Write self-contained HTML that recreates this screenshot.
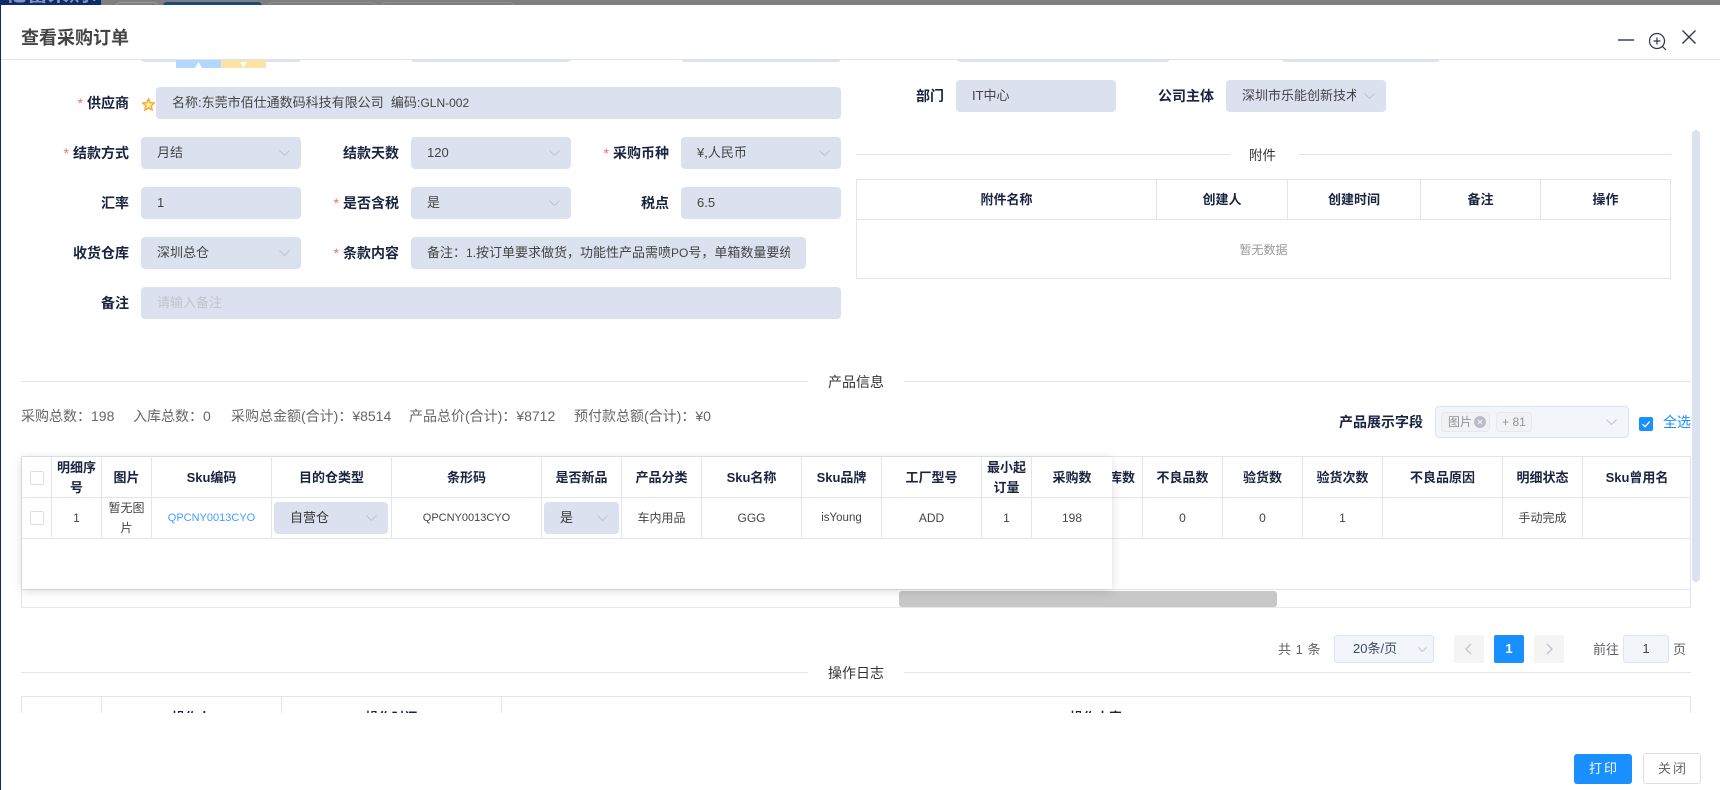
<!DOCTYPE html>
<html lang="zh-CN"><head><meta charset="utf-8"><title>查看采购订单</title>
<style>
*{box-sizing:border-box}
html,body{margin:0;padding:0;width:1720px;height:790px;overflow:hidden;background:#7f7f7f;font-family:"Liberation Sans","Noto Sans CJK SC",sans-serif;color:#444}
.a{position:absolute;white-space:nowrap}
.i{position:absolute;height:32px;line-height:32px;background:#dbe1ef;border-radius:4px;font-size:13px;color:#444;padding-left:16px;white-space:nowrap;overflow:hidden}
.i svg,.s svg{position:absolute;right:11px;top:13px}
.clip{display:block;overflow:hidden;height:32px}
.l{position:absolute;height:32px;line-height:32px;font-size:14px;font-weight:700;color:#1a2440;text-align:right;white-space:nowrap}
.l b{color:#f56c6c;font-weight:400;margin-right:4px}
.ln{position:absolute;height:1px;background:#e0e3ed}
.dv{position:absolute;font-size:14px;line-height:20px;color:#333;white-space:nowrap}
.st{position:absolute;top:406px;font-size:14px;line-height:20px;color:#666;white-space:nowrap}
.r{position:absolute;display:flex}
.r>div{flex:none;height:100%;border-right:1px solid #e0e5ef;border-bottom:1px solid #e0e5ef;display:flex;align-items:center;justify-content:center;text-align:center;position:relative}
.hd>div{font-size:13px;font-weight:700;color:#1a2440;line-height:20px;padding-top:1px}
.bd>div{font-size:12px;color:#444;line-height:20px}
.ck{width:14px;height:14px;border:1px solid #dcdfe6;border-radius:2px;background:#fff}
.s{position:absolute;background:#dbe1ef;border-radius:4px;height:32px;line-height:32px;font-size:13px;color:#333}
.pg{position:absolute;top:635px;width:30px;height:28px;background:#f4f4f5;border-radius:2px}
.tg{position:absolute;top:412px;height:20px;line-height:18px;font-size:12px;color:#909399;background:#f0f2f5;border:1px solid #e9e9eb;border-radius:4px;white-space:nowrap}
</style></head><body>
<!-- backdrop -->
<div class="a" style="left:0;top:0;width:101px;height:5px;background:#0e2a6b;overflow:hidden"><div class="a" style="left:6px;top:-17px;font-size:21px;font-weight:700;color:#7f93bd;line-height:24px">亿蓄采购司</div></div>
<div class="a" style="left:116px;top:2px;width:42px;height:6px;border:1px solid #999;border-radius:4px 4px 0 0"></div>
<div class="a" style="left:163px;top:2px;width:99px;height:6px;background:#1c4a7e;border-radius:4px 4px 0 0"></div>
<div class="a" style="left:268px;top:2px;width:108px;height:6px;border:1px solid #8f8f8f;border-radius:4px 4px 0 0"></div>
<div class="a" style="left:381px;top:2px;width:133px;height:6px;border:1px solid #8f8f8f;border-radius:4px 4px 0 0"></div>
<div class="a" style="left:0;top:5px;width:1px;height:785px;background:#0e2a6b"></div>
<!-- dialog -->
<div class="a" style="left:1px;top:5px;width:1719px;height:785px;background:#fff"></div>

<!-- peek inputs -->
<div class="a" style="left:141px;top:55px;width:160px;height:7px;background:#dbe1ef;border-radius:4px"></div>
<div class="a" style="left:411px;top:55px;width:160px;height:7px;background:#dbe1ef;border-radius:4px"></div>
<div class="a" style="left:681px;top:55px;width:160px;height:7px;background:#dbe1ef;border-radius:4px"></div>
<div class="a" style="left:957px;top:55px;width:213px;height:7px;background:#dbe1ef;border-radius:4px"></div>
<div class="a" style="left:1282px;top:55px;width:158px;height:7px;background:#dbe1ef;border-radius:4px"></div>
<div class="a" style="left:176px;top:60px;width:45px;height:8px;background:#b3d8ff"></div>
<div class="a" style="left:221px;top:60px;width:45px;height:8px;background:#fde2a6"></div>
<svg class="a" style="left:195px;top:62px" width="7" height="6"><path d="M3.500 0L7 6H0z" fill="#fff"/></svg>
<svg class="a" style="left:240px;top:62px" width="7" height="6"><path d="M0 0H7L3.500 6z" fill="#fff"/></svg>

<!-- header -->
<div class="a" style="left:1px;top:5px;width:1719px;height:50px;background:#fff"></div>
<div class="a" style="left:1px;top:55px;width:1719px;height:5px;background:#fff;border-bottom:1px solid #dfe4ec"></div>
<div class="a" style="left:21px;top:25px;font-size:18px;line-height:27px;font-weight:700;color:#444">查看采购订单</div>
<svg class="a" style="left:1610px;top:25px" width="95" height="30" fill="none" stroke="#2b3553">
<path d="M8 15H24" stroke-width="1.400"/>
<circle cx="47" cy="16" r="7.500" stroke-width="1.200"/><path d="M47 12.500V19.500M43.500 16H50.500" stroke-width="1.200"/><path d="M52.500 21.500L56 25" stroke-width="1.200"/>
<path d="M72.500 5.500L85.500 18.500M85.500 5.500L72.500 18.500" stroke-width="1.300"/>
</svg>

<!-- form -->
<div class="l" style="left:21px;width:108px;top:87px"><b>*</b>供应商</div>
<svg class="a" style="left:142px;top:98px" width="13" height="13" viewBox="0 0 15 15"><path d="M7.500 0.800L9.400 5.300L14.300 5.700L10.600 9L11.700 13.900L7.500 11.300L3.300 13.900L4.400 9L0.700 5.700L5.600 5.300Z" fill="#fce9b0" stroke="#f3b23c" stroke-width="1.800"/></svg>
<div class="i" style="left:156px;top:87px;width:685px">名称:东莞市佰仕通数码科技有限公司&nbsp;&nbsp;编码:<span style="font-size:12px">GLN-002</span></div>

<div class="l" style="left:21px;width:108px;top:137px"><b>*</b>结款方式</div>
<div class="i" style="left:141px;top:137px;width:160px">月结<svg width="11" height="6" fill="none" stroke="#c0c4cc"><path d="M.5 .5L5.500 5.500L10.500 .5"/></svg></div>
<div class="l" style="left:300px;width:99px;top:137px">结款天数</div>
<div class="i" style="left:411px;top:137px;width:160px">120<svg width="11" height="6" fill="none" stroke="#c0c4cc"><path d="M.5 .5L5.500 5.500L10.500 .5"/></svg></div>
<div class="l" style="left:570px;width:99px;top:137px"><b>*</b>采购币种</div>
<div class="i" style="left:681px;top:137px;width:160px">¥,人民币<svg width="11" height="6" fill="none" stroke="#c0c4cc"><path d="M.5 .5L5.500 5.500L10.500 .5"/></svg></div>

<div class="l" style="left:21px;width:108px;top:187px">汇率</div>
<div class="i" style="left:141px;top:187px;width:160px">1</div>
<div class="l" style="left:300px;width:99px;top:187px"><b>*</b>是否含税</div>
<div class="i" style="left:411px;top:187px;width:160px">是<svg width="11" height="6" fill="none" stroke="#c0c4cc"><path d="M.5 .5L5.500 5.500L10.500 .5"/></svg></div>
<div class="l" style="left:570px;width:99px;top:187px">税点</div>
<div class="i" style="left:681px;top:187px;width:160px">6.5</div>

<div class="l" style="left:21px;width:108px;top:237px">收货仓库</div>
<div class="i" style="left:141px;top:237px;width:160px">深圳总仓<svg width="11" height="6" fill="none" stroke="#c0c4cc"><path d="M.5 .5L5.500 5.500L10.500 .5"/></svg></div>
<div class="l" style="left:300px;width:99px;top:237px"><b>*</b>条款内容</div>
<div class="i" style="left:411px;top:237px;width:395px"><span class="clip" style="width:363px">备注：<span style="font-size:12px">1.</span>按订单要求做货，功能性产品需喷<span style="font-size:12px">PO</span>号，单箱数量要统一</span></div>

<div class="l" style="left:21px;width:108px;top:287px">备注</div>
<div class="i" style="left:141px;top:287px;width:700px;color:#c0c4cc">请输入备注</div>

<div class="l" style="left:900px;width:44px;top:80px">部门</div>
<div class="i" style="left:956px;top:80px;width:160px">IT中心</div>
<div class="l" style="left:1130px;width:84px;top:80px">公司主体</div>
<div class="i" style="left:1226px;top:80px;width:160px"><span class="clip" style="width:114px">深圳市乐能创新技术</span><svg width="11" height="6" fill="none" stroke="#c0c4cc"><path d="M.5 .5L5.500 5.500L10.500 .5"/></svg></div>

<!-- attachments -->
<div class="ln" style="left:856px;top:154px;width:374px"></div>
<div class="dv" style="left:1249px;top:146px;font-size:13.500px">附件</div>
<div class="ln" style="left:1299px;top:154px;width:372px"></div>
<div class="r hd" style="left:856px;top:179px;height:41px;border-top:1px solid #e0e5ef;border-left:1px solid #e0e5ef;width:815px">
<div style="width:300px">附件名称</div><div style="width:131px">创建人</div><div style="width:133px">创建时间</div><div style="width:120px">备注</div><div style="width:130px">操作</div></div>
<div class="a" style="left:856px;top:220px;width:815px;height:59px;border:1px solid #e0e5ef;border-top:0;text-align:center;line-height:61px;font-size:12px;color:#999">暂无数据</div>

<!-- vertical scrollbar -->
<div class="a" style="left:1692px;top:130px;width:8px;height:452px;background:#dbe1ef;border-radius:4px"></div>

<!-- product info -->
<div class="ln" style="left:21px;top:381px;width:787px"></div>
<div class="dv" style="left:828px;top:372px">产品信息</div>
<div class="ln" style="left:904px;top:381px;width:787px"></div>
<div class="st" style="left:21px">采购总数：198</div>
<div class="st" style="left:133px">入库总数：0</div>
<div class="st" style="left:231px">采购总金额(合计)：¥8514</div>
<div class="st" style="left:409px">产品总价(合计)：¥8712</div>
<div class="st" style="left:574px">预付款总额(合计)：¥0</div>

<div class="a" style="left:1339px;top:412px;font-size:14px;font-weight:700;line-height:20px;color:#1a2440">产品展示字段</div>
<div class="a" style="left:1435px;top:406px;width:194px;height:32px;background:#f2f5fa;border:1px solid #dde3f0;border-radius:4px"></div>
<div class="tg" style="left:1441px;width:49px;padding-left:6px">图片<svg class="a" style="left:31px;top:2px" width="14" height="14"><circle cx="7" cy="7" r="6" fill="#b9bdc6"/><path d="M5 5L9 9M9 5L5 9" stroke="#f0f2f5"/></svg></div>
<div class="tg" style="left:1496px;width:36px;text-align:center">+ 81</div>
<svg class="a" style="left:1606px;top:419px" width="11" height="6" fill="none" stroke="#c0c4cc"><path d="M.5 .5L5.500 5.500L10.500 .5"/></svg>
<svg class="a" style="left:1639px;top:417px" width="14" height="14"><rect width="14" height="14" rx="2" fill="#1890ff"/><path d="M3.500 7.200L6 9.700L10.800 4.500" fill="none" stroke="#fff" stroke-width="1.300"/></svg>
<div class="a" style="left:1663px;top:412px;font-size:14px;line-height:20px;color:#1890ff">全选</div>

<!-- main table underlying -->
<div class="a" style="left:21px;top:456px;width:1670px;height:152px;border:1px solid #e0e5ef;border-bottom-color:#e6e8f0"></div>
<div class="ln" style="left:21px;top:589px;width:1670px;background:#e0e5ef"></div>
<div class="r hd" style="left:1112px;top:457px;height:41px">
<div style="width:31px;justify-content:flex-end;padding-right:7px;white-space:nowrap">入库数</div><div style="width:80px">不良品数</div><div style="width:80px">验货数</div><div style="width:80px">验货次数</div><div style="width:120px">不良品原因</div><div style="width:80px">明细状态</div><div style="width:108px;border-right:0">Sku曾用名</div></div>
<div class="r bd" style="left:1112px;top:498px;height:41px">
<div style="width:31px"></div><div style="width:80px">0</div><div style="width:80px">0</div><div style="width:80px">1</div><div style="width:120px"></div><div style="width:80px">手动完成</div><div style="width:108px;border-right:0"></div></div>

<!-- scrollbar thumb -->
<div class="a" style="left:899px;top:591px;width:378px;height:16px;background:#c8c8c8;border-radius:3px"></div>

<!-- fixed part -->
<div class="a" style="left:22px;top:457px;width:1090px;height:132px;background:#fff;box-shadow:0 2px 10px rgba(0,0,0,.14)"></div>
<div class="r hd" style="left:22px;top:457px;height:41px">
<div style="width:30px"><span class="ck"></span></div><div style="width:50px">明细序<br>号</div><div style="width:50px">图片</div><div style="width:120px">Sku编码</div><div style="width:120px">目的仓类型</div><div style="width:150px">条形码</div><div style="width:80px">是否新品</div><div style="width:80px">产品分类</div><div style="width:100px">Sku名称</div><div style="width:80px">Sku品牌</div><div style="width:100px">工厂型号</div><div style="width:50px">最小起<br>订量</div><div style="width:80px;border-right:0">采购数</div></div>
<div class="r bd" style="left:22px;top:498px;height:41px">
<div style="width:30px"><span class="ck"></span></div><div style="width:50px">1</div><div style="width:50px">暂无图<br>片</div><div style="width:120px;color:#409eff;font-size:11px">QPCNY0013CYO</div><div style="width:120px"></div><div style="width:150px;font-size:11px">QPCNY0013CYO</div><div style="width:80px"></div><div style="width:80px">车内用品</div><div style="width:100px">GGG</div><div style="width:80px;font-size:11.500px">isYoung</div><div style="width:100px">ADD</div><div style="width:50px">1</div><div style="width:80px;border-right:0">198</div></div>
<div class="s" style="left:274px;top:502px;width:114px;padding-left:16px">自营仓<svg width="11" height="6" fill="none" stroke="#c0c4cc"><path d="M.5 .5L5.500 5.500L10.500 .5"/></svg></div>
<div class="s" style="left:544px;top:502px;width:75px;padding-left:16px">是<svg width="11" height="6" fill="none" stroke="#c0c4cc"><path d="M.5 .5L5.500 5.500L10.500 .5"/></svg></div>

<!-- pagination -->
<div class="a" style="left:1278px;top:640px;font-size:13px;line-height:20px;color:#606266;word-spacing:1px">共 1 条</div>
<div class="a" style="left:1334px;top:635px;width:100px;height:28px;background:#f2f5fa;border:1px solid #dde3f0;border-radius:3px;font-size:13px;line-height:26px;color:#3d4a63;padding-left:18px">20条/页<svg class="a" style="left:83px;top:11px" width="9" height="5" fill="none" stroke="#c0c4cc"><path d="M.5 .5L4.500 4.500L8.500 .5"/></svg></div>
<div class="pg" style="left:1454px"><svg class="a" style="left:11px;top:8px" width="7" height="12" fill="none" stroke="#c0c4cc" stroke-width="1.300"><path d="M6 1L1 6L6 11"/></svg></div>
<div class="pg" style="left:1494px;background:#1890ff;color:#fff;font-size:13px;font-weight:700;text-align:center;line-height:28px">1</div>
<div class="pg" style="left:1534px"><svg class="a" style="left:12px;top:8px" width="7" height="12" fill="none" stroke="#c0c4cc" stroke-width="1.300"><path d="M1 1L6 6L1 11"/></svg></div>
<div class="a" style="left:1593px;top:640px;font-size:13px;line-height:20px;color:#606266">前往</div>
<div class="a" style="left:1623px;top:635px;width:46px;height:28px;background:#f2f5fa;border:1px solid #dde3f0;border-radius:3px;font-size:13px;line-height:26px;color:#444;text-align:center">1</div>
<div class="a" style="left:1673px;top:640px;font-size:13px;line-height:20px;color:#606266">页</div>

<!-- log -->
<div class="ln" style="left:21px;top:672px;width:787px"></div>
<div class="dv" style="left:828px;top:663px">操作日志</div>
<div class="ln" style="left:904px;top:672px;width:787px"></div>
<div class="a" style="left:21px;top:696px;width:1670px;height:17px;overflow:hidden;border-top:1px solid #e0e5ef">
<div class="r hd" style="left:0;top:0;height:41px;width:1670px;border-left:1px solid #e0e5ef">
<div style="width:80px"></div><div style="width:180px">操作人</div><div style="width:220px">操作时间</div><div style="width:1189px">操作内容</div></div>
</div>

<!-- footer -->
<div class="a" style="left:1574px;top:754px;width:58px;height:30px;background:#1890ff;border-radius:3px;color:#fff;font-size:13px;line-height:30px;text-align:center;letter-spacing:2px;padding-left:2px">打印</div>
<div class="a" style="left:1643px;top:753px;width:58px;height:31px;background:#fff;border:1px solid #dcdfe6;border-radius:3px;color:#666;font-size:13px;line-height:29px;text-align:center;letter-spacing:2px;padding-left:2px">关闭</div>
</body></html>
